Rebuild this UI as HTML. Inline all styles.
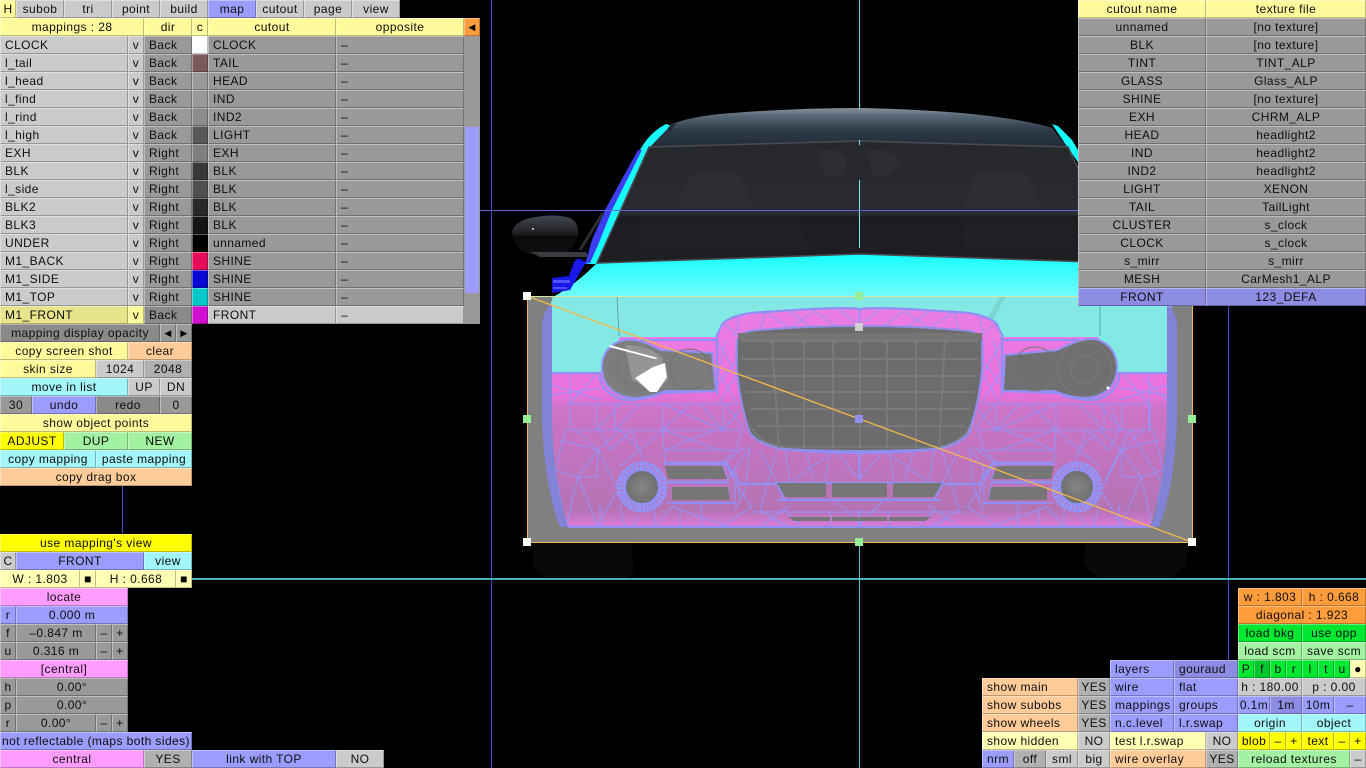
<!DOCTYPE html>
<html><head><meta charset="utf-8"><title>Mapping</title>
<style>
html,body{margin:0;padding:0;background:#000;width:1366px;height:768px;overflow:hidden}
#p{position:relative;width:1366px;height:768px;overflow:hidden;background:#000;font:12px/18px "Liberation Sans",sans-serif;letter-spacing:.42px;color:#0e0e0e;filter:blur(.35px)}
svg{position:absolute;left:0;top:0}
b{position:absolute;display:block;font-weight:normal;height:18px;text-align:center;white-space:nowrap;overflow:hidden;box-sizing:border-box;background:#999;box-shadow:inset 1px 1px 0 rgba(255,255,255,.36),inset -1px -1px 0 rgba(0,0,0,.26)}
.l{text-align:left;padding-left:5px}
.g{background:#999}.d{background:#8a8a8a}.w{background:#cbcbcb}.m{background:#b0b0b0}
.y{background:#fffb9c}.p{background:#ffffb4}.Y{background:#ffff00}
.b{background:#9c9cff}.B{background:#8c8ce2}.k{background:#ff9cff}
.c{background:#a2f5f8}.o{background:#ffcc99}.n{background:#a2f2a2}.N{background:#00e832}.O{background:#ff9c3c}
</style></head><body><div id="p">
<svg width="1366" height="768" viewBox="0 0 1366 768">
<defs>
<linearGradient id="rf" x1="0" y1="0" x2="0" y2="1"><stop offset="0" stop-color="#8a939c"/><stop offset=".18" stop-color="#5c6b7a"/><stop offset=".55" stop-color="#303c4a"/><stop offset="1" stop-color="#212b37"/></linearGradient>
<linearGradient id="ws" x1="0" y1="0" x2="0" y2="1"><stop offset="0" stop-color="#25272c"/><stop offset=".6" stop-color="#2a2b30"/><stop offset=".62" stop-color="#1c1d20"/><stop offset="1" stop-color="#1e1f23"/></linearGradient>
<linearGradient id="cy" x1="0" y1="0" x2="0" y2="1"><stop offset="0" stop-color="#14ffff"/><stop offset=".4" stop-color="#3cfdfd"/><stop offset="1" stop-color="#72fcfa"/></linearGradient>
<linearGradient id="pk" x1="0" y1="0" x2="0" y2="1"><stop offset="0" stop-color="#ea7ee4"/><stop offset=".38" stop-color="#ec72de"/><stop offset=".46" stop-color="#cc74c8"/><stop offset=".92" stop-color="#b474b4"/><stop offset="1" stop-color="#dc7cdc"/></linearGradient>
<linearGradient id="mr" x1="0" y1="0" x2="0" y2="1"><stop offset="0" stop-color="#43474f"/><stop offset=".5" stop-color="#1a1b1f"/><stop offset=".55" stop-color="#0a0a0a"/><stop offset="1" stop-color="#101010"/></linearGradient>
<radialGradient id="fg"><stop offset="0" stop-color="#858585"/><stop offset="1" stop-color="#6e6e6e"/></radialGradient>
<g id="half">
<path fill="none" stroke="#9494f8" stroke-width="1" d="M568,404H735M566,430H742M570,373V430M597,404V430M615,404V430M663,404V430M723,404V430
M552,385L600,400M552,395L600,388M597,373L570,404M620,404L597,430M640,404L615,430M690,404L663,430M663,404L723,430M700,404L723,430
M575,430L598,450L620,430L598,450L578,477L566,527M598,450L618,490L597,527M598,450L597,477L578,477M578,477L598,527M578,477L555,470M555,470L566,430M555,470L562,505
M620,430L640,450L663,430L640,450L620,466M663,430L665,466M663,430L720,450M715,430L665,450H742M742,430L735,450L705,480M745,447L700,483L702,527M750,447L725,483M750,447L745,490L735,510
M665,462H725L735,483L752,507L720,527M665,483H725M665,503H735M672,507L655,527M672,507L730,527L700,527M728,466L735,483V505M735,466L740,500M725,466L730,500
M600,527V505M625,527L620,505M655,527V505M680,507V527M640,515L632,527M777,450L760,510L790,527M760,450L777,483M785,450L790,483L835,450L860,480M805,450L815,483M825,483L830,450M860,450V480
M777,500H860M752,512H860M770,517L785,527M785,510L800,525M830,512V527M790,505L760,527M835,500L860,525V510M600,430L610,450L632,430M632,430L645,465M560,440L598,450"/>
<path fill="none" stroke="#9494f8" stroke-width="1" d="M723,323L740,337M740,315L735,337M765,312L760,330M765,312L790,328M790,312L810,326M815,311L790,328M815,311L835,326M840,310L860,326M860,310V326
M716,340L737,375M726,340L718,372M718,372L738,405M738,372L718,405M718,385L735,362M725,404L745,430M740,410L722,432"/>
<path fill="none" stroke="#9090f4" stroke-width="2.2" d="M723,323Q732,316 750,313Q860,305 860,310M716,337L723,323M640,340H716M717,337V395M600,372Q598,390 620,399Q640,402 662,393L715,391M552,373H600M737,340Q734,385 750,433Q760,445 783,449Q820,453 860,453M665,464H727L740,484H777L785,500M668,482H725M672,503H735M780,500H860M775,483H860M568,527H860"/>
<path fill="#767676" d="M665,466H722L727,479H668ZM672,487H728L730,500H672ZM777,483H826V497H785Z"/>
<path fill="#767676" d="M788,517H830V521H794ZM832,517H860V521H832ZM832,483H860V497H832Z"/>
<circle cx="642" cy="487" r="21" fill="none" stroke="#9494f8" stroke-width="8" stroke-dasharray="3.2 1"/>
<circle cx="642" cy="487" r="24.5" fill="none" stroke="#9494f8" stroke-width="1.5"/>
<circle cx="642" cy="487" r="17" fill="url(#fg)" stroke="#9090f4" stroke-width="2"/>
<path fill="#8282d6" d="M551,304Q543,312 542,325V420Q545,490 560,527H568Q553,480 552,420V304Z"/>
</g>
</defs>

<rect x="491" y="0" width="1" height="768" fill="#4a4ac4"/>
<rect x="1228" y="300" width="1" height="362" fill="#4a4ac4"/>
<rect x="122" y="484" width="1" height="52" fill="#4a4ac4"/>
<rect x="192" y="578" width="1174" height="2" fill="#46b4b4"/>

<!-- tyres -->
<path fill="#090909" d="M534,543H631L634,570L628,578H545L533,565Z"/>
<path fill="#090909" d="M1085,543H1188L1186,565L1172,578H1098L1084,565Z"/>

<!-- upper car -->
<path fill="url(#cy)" d="M553,297Q575,285 597,263L860,254L1120,263Q1150,285 1172,297Z"/>
<path fill="#16ffff" d="M666,124L672,126L655,147L597,264L585,264Q596,235 612,205Q625,175 640,150Q650,132 666,124Z"/>
<path fill="#3c3cf0" d="M638,150L642,150L612,210L598,245L590,263L585,264L592,240L605,210Z"/>
<path fill="#16ffff" d="M1052,124L1058,126L1072,140L1082,157V168L1066,145Z"/>
<path fill="#1818e8" d="M578,258L586,262L570,290L552,293V278L569,276L574,262Z"/>
<path fill="#5050ff" d="M553,280H570V283H553ZM553,287H567V289H553Z"/>
<path fill="url(#rf)" d="M672,124Q690,117 720,114Q790,108 860,108Q960,110 1017,120Q1040,124 1052,128L1067,147L860,141L650,147Z"/>
<path fill="#222b36" d="M668,128L672,123L676,124L668,135Z"/>
<path fill="url(#ws)" stroke="#484a50" stroke-width="1.6" d="M649,147L860,141L1068,147L1122,263L860,254L597,263Z"/>
<path fill="#2d2e33" d="M690,175Q715,172 740,175Q748,190 752,208H678Q682,190 690,175ZM820,150Q845,148 847,162Q845,178 828,176Q818,170 820,150ZM868,150Q895,148 900,162Q895,178 872,176ZM975,175Q1000,172 1028,175Q1036,190 1040,208H965Q968,190 975,175Z"/>
<path fill="#202125" d="M640,222H800L808,250H638ZM965,222H1075V250H962Z"/>
<rect x="859" y="0" width="1" height="109" fill="#6cd8e4"/>
<rect x="859" y="140" width="1" height="5" fill="#7fe4ee"/>
<rect x="859" y="180" width="1" height="68" fill="#7fe4ee"/>
<rect x="859" y="543" width="1" height="225" fill="#50c8d8"/>
<rect x="480" y="210" width="600" height="1" fill="#6464d8"/>
<!-- mirror -->
<path fill="url(#mr)" d="M512,232Q514,222 530,218Q555,213 570,218Q579,222 578,235Q574,250 562,254H530Q514,250 512,232Z"/>
<path fill="#3a3c42" d="M530,252H586L588,257H540Z"/>
<path stroke="#2a3030" stroke-width="3" fill="none" d="M580,250L603,213"/>
<circle cx="533" cy="229" r="1" fill="#d8d8d8"/>

<!-- box -->
<rect x="527" y="296" width="665" height="246" fill="#808080"/>
<path fill="#84e8e4" d="M553,296H1172V300L1167,374H552L549,310Z"/>
<path fill="#7ad6d2" d="M1000,296L1006,296L990,325L984,325Z"/>
<path fill="none" stroke="#5da8a6" d="M617,296L619,336M1100,296V336"/>
<path fill="url(#pk)" d="M552,373H600L620,337H717L723,323Q732,316 750,313Q860,305 967,313Q988,316 997,326L1001,337H1098L1118,373H1167L1167,420Q1165,480 1150,527H568Q553,480 552,420Z"/>
<use href="#half"/>
<use href="#half" transform="translate(1719,0) scale(-1,1)"/>
<path fill="none" stroke="#9494f8" stroke-width="1" d="M1110,404L1120,430M1135,404H1150V430M1145,380L1167,400M1130,430L1160,480M1105,480L1130,430"/>

<!-- headlights -->
<path fill="#7c7c7c" stroke="#9090f4" stroke-width="2" d="M602,369Q602,345 625,340Q640,338 660,350L712,353L716,391H665Q650,398 632,398Q604,394 602,369Z"/>
<circle cx="632" cy="369" r="26" fill="none" stroke="#848484"/>
<circle cx="632" cy="369" r="15" fill="none" stroke="#747474"/>
<circle cx="690" cy="369" r="20" fill="none" stroke="#727272"/>
<path fill="#a8a8a8" d="M625,345Q650,345 662,358L668,380L655,392L632,380Z" opacity=".55"/>
<path fill="#fff" d="M610,345L658,358L655,359L609,347ZM665,363L667,377L657,392L650,392L635,378L653,367Z"/>
<path fill="#6f6f6f" stroke="#9090f4" stroke-width="2" d="M1117,369Q1117,345 1095,339Q1080,338 1058,350L1005,355L1003,391H1055Q1070,398 1088,398Q1115,394 1117,369Z"/>
<circle cx="1085" cy="369" r="27" fill="none" stroke="#7a7a7a"/>
<circle cx="1085" cy="369" r="14" fill="none" stroke="#7a7a7a"/>
<circle cx="1035" cy="369" r="22" fill="none" stroke="#787878"/>
<circle cx="1108" cy="388" r="1.5" fill="#fff"/>

<!-- grille -->
<path fill="#6c6c6c" stroke="#8e8ee8" stroke-width="2" d="M737,342Q738,334 750,331Q800,326 860,326Q920,326 970,331Q981,334 982,342V370Q978,410 968,433Q958,445 935,449Q860,453 785,449Q760,445 750,433Q740,405 737,370Z"/>
<path fill="#757575" d="M738,333H982V341H738Z"/>
<path fill="none" stroke="#7a7a7a" stroke-width="2" d="M742,341H978M742,359H978M743,376H976M746,392H974M750,409H970M756,426H964M772,340L779,448M804,340V448M833,340V448M860,340V448M887,340V448M916,340V448M945,340L939,448"/>
<path fill="none" stroke="#7a857a" d="M750,425Q760,445 785,447H935Q960,445 970,425"/>

<!-- box edges -->
<rect x="527" y="296" width="665" height="1" fill="#d6e6a6"/>
<rect x="527" y="296" width="1" height="246" fill="#f2b84c"/>
<rect x="1192" y="296" width="1" height="246" fill="#f2b84c"/>
<rect x="527" y="542" width="665" height="1" fill="#f2b84c"/>
<path d="M527,296L1192,542" stroke="#f2b84c" stroke-width="1.3" fill="none"/>
<rect x="523" y="292" width="8" height="8" fill="#fff"/>
<rect x="1188" y="538" width="8" height="8" fill="#fff"/>
<rect x="523" y="538" width="8" height="8" fill="#fff"/>
<rect x="855" y="292" width="8" height="8" fill="#96ee96"/>
<rect x="523" y="415" width="8" height="8" fill="#96ee96"/>
<rect x="1188" y="415" width="8" height="8" fill="#96ee96"/>
<rect x="855" y="538" width="8" height="8" fill="#96ee96"/>
<rect x="855" y="323" width="8" height="8" fill="#cfcfcf"/>
<rect x="855" y="415" width="8" height="8" fill="#9090f0"/>
</svg>

<!-- top tabs -->
<b class="y" style="left:0;top:0;width:16px">H</b>
<b class="w" style="left:16px;top:0;width:48px">subob</b>
<b class="w" style="left:64px;top:0;width:48px">tri</b>
<b class="w" style="left:112px;top:0;width:48px">point</b>
<b class="w" style="left:160px;top:0;width:48px">build</b>
<b class="b" style="left:208px;top:0;width:48px">map</b>
<b class="w" style="left:256px;top:0;width:48px">cutout</b>
<b class="w" style="left:304px;top:0;width:48px">page</b>
<b class="w" style="left:352px;top:0;width:48px">view</b>
<!-- header -->
<b class="y" style="left:0;top:18px;width:144px">mappings : 28</b>
<b class="y" style="left:144px;top:18px;width:48px">dir</b>
<b class="y" style="left:192px;top:18px;width:16px">c</b>
<b class="y" style="left:208px;top:18px;width:128px">cutout</b>
<b class="y" style="left:336px;top:18px;width:128px">opposite</b>
<b class="O" style="left:464px;top:18px;width:16px;font-size:9px;color:#000">◀</b>
<!-- rows -->
<b class="w l" style="left:0;top:36px;width:128px">CLOCK</b><b class="w" style="left:128px;top:36px;width:16px">v</b><b class="g l" style="left:144px;top:36px;width:48px">Back</b><b style="left:192px;top:36px;width:16px;background:#fff"></b><b class="g l" style="left:208px;top:36px;width:128px">CLOCK</b><b class="g l" style="left:336px;top:36px;width:128px">–</b>
<b class="w l" style="left:0;top:54px;width:128px">l_tail</b><b class="w" style="left:128px;top:54px;width:16px">v</b><b class="g l" style="left:144px;top:54px;width:48px">Back</b><b style="left:192px;top:54px;width:16px;background:#7c5a5a"></b><b class="g l" style="left:208px;top:54px;width:128px">TAIL</b><b class="g l" style="left:336px;top:54px;width:128px">–</b>
<b class="w l" style="left:0;top:72px;width:128px">l_head</b><b class="w" style="left:128px;top:72px;width:16px">v</b><b class="g l" style="left:144px;top:72px;width:48px">Back</b><b style="left:192px;top:72px;width:16px;background:#999"></b><b class="g l" style="left:208px;top:72px;width:128px">HEAD</b><b class="g l" style="left:336px;top:72px;width:128px">–</b>
<b class="w l" style="left:0;top:90px;width:128px">l_find</b><b class="w" style="left:128px;top:90px;width:16px">v</b><b class="g l" style="left:144px;top:90px;width:48px">Back</b><b style="left:192px;top:90px;width:16px;background:#999"></b><b class="g l" style="left:208px;top:90px;width:128px">IND</b><b class="g l" style="left:336px;top:90px;width:128px">–</b>
<b class="w l" style="left:0;top:108px;width:128px">l_rind</b><b class="w" style="left:128px;top:108px;width:16px">v</b><b class="g l" style="left:144px;top:108px;width:48px">Back</b><b style="left:192px;top:108px;width:16px;background:#8c8c8c"></b><b class="g l" style="left:208px;top:108px;width:128px">IND2</b><b class="g l" style="left:336px;top:108px;width:128px">–</b>
<b class="w l" style="left:0;top:126px;width:128px">l_high</b><b class="w" style="left:128px;top:126px;width:16px">v</b><b class="g l" style="left:144px;top:126px;width:48px">Back</b><b style="left:192px;top:126px;width:16px;background:#585858"></b><b class="g l" style="left:208px;top:126px;width:128px">LIGHT</b><b class="g l" style="left:336px;top:126px;width:128px">–</b>
<b class="w l" style="left:0;top:144px;width:128px">EXH</b><b class="w" style="left:128px;top:144px;width:16px">v</b><b class="g l" style="left:144px;top:144px;width:48px">Right</b><b style="left:192px;top:144px;width:16px;background:#808080"></b><b class="g l" style="left:208px;top:144px;width:128px">EXH</b><b class="g l" style="left:336px;top:144px;width:128px">–</b>
<b class="w l" style="left:0;top:162px;width:128px">BLK</b><b class="w" style="left:128px;top:162px;width:16px">v</b><b class="g l" style="left:144px;top:162px;width:48px">Right</b><b style="left:192px;top:162px;width:16px;background:#383838"></b><b class="g l" style="left:208px;top:162px;width:128px">BLK</b><b class="g l" style="left:336px;top:162px;width:128px">–</b>
<b class="w l" style="left:0;top:180px;width:128px">l_side</b><b class="w" style="left:128px;top:180px;width:16px">v</b><b class="g l" style="left:144px;top:180px;width:48px">Right</b><b style="left:192px;top:180px;width:16px;background:#505050"></b><b class="g l" style="left:208px;top:180px;width:128px">BLK</b><b class="g l" style="left:336px;top:180px;width:128px">–</b>
<b class="w l" style="left:0;top:198px;width:128px">BLK2</b><b class="w" style="left:128px;top:198px;width:16px">v</b><b class="g l" style="left:144px;top:198px;width:48px">Right</b><b style="left:192px;top:198px;width:16px;background:#282828"></b><b class="g l" style="left:208px;top:198px;width:128px">BLK</b><b class="g l" style="left:336px;top:198px;width:128px">–</b>
<b class="w l" style="left:0;top:216px;width:128px">BLK3</b><b class="w" style="left:128px;top:216px;width:16px">v</b><b class="g l" style="left:144px;top:216px;width:48px">Right</b><b style="left:192px;top:216px;width:16px;background:#141414"></b><b class="g l" style="left:208px;top:216px;width:128px">BLK</b><b class="g l" style="left:336px;top:216px;width:128px">–</b>
<b class="w l" style="left:0;top:234px;width:128px">UNDER</b><b class="w" style="left:128px;top:234px;width:16px">v</b><b class="g l" style="left:144px;top:234px;width:48px">Right</b><b style="left:192px;top:234px;width:16px;background:#000"></b><b class="g l" style="left:208px;top:234px;width:128px">unnamed</b><b class="g l" style="left:336px;top:234px;width:128px">–</b>
<b class="w l" style="left:0;top:252px;width:128px">M1_BACK</b><b class="w" style="left:128px;top:252px;width:16px">v</b><b class="g l" style="left:144px;top:252px;width:48px">Right</b><b style="left:192px;top:252px;width:16px;background:#e80c5c"></b><b class="g l" style="left:208px;top:252px;width:128px">SHINE</b><b class="g l" style="left:336px;top:252px;width:128px">–</b>
<b class="w l" style="left:0;top:270px;width:128px">M1_SIDE</b><b class="w" style="left:128px;top:270px;width:16px">v</b><b class="g l" style="left:144px;top:270px;width:48px">Right</b><b style="left:192px;top:270px;width:16px;background:#0808d0"></b><b class="g l" style="left:208px;top:270px;width:128px">SHINE</b><b class="g l" style="left:336px;top:270px;width:128px">–</b>
<b class="w l" style="left:0;top:288px;width:128px">M1_TOP</b><b class="w" style="left:128px;top:288px;width:16px">v</b><b class="g l" style="left:144px;top:288px;width:48px">Right</b><b style="left:192px;top:288px;width:16px;background:#00c8c8"></b><b class="g l" style="left:208px;top:288px;width:128px">SHINE</b><b class="g l" style="left:336px;top:288px;width:128px">–</b>
<b class="l" style="left:0;top:306px;width:128px;background:#e8e48c">M1_FRONT</b><b class="y" style="left:128px;top:306px;width:16px">v</b><b class="d l" style="left:144px;top:306px;width:48px">Back</b><b style="left:192px;top:306px;width:16px;background:#d010d0"></b><b class="w l" style="left:208px;top:306px;width:128px">FRONT</b><b class="w l" style="left:336px;top:306px;width:128px">–</b>
<!-- scrollbar -->
<b class="g" style="left:464px;top:36px;width:16px;height:288px;box-shadow:none"></b>
<b class="b" style="left:465px;top:127px;width:14px;height:166px;box-shadow:none"></b>
<!-- left lower -->
<b class="d" style="left:0;top:324px;width:160px">mapping display opacity</b>
<b class="g" style="left:160px;top:324px;width:16px;font-size:9px;color:#000">◀</b>
<b class="g" style="left:176px;top:324px;width:16px;font-size:9px;color:#000">▶</b>
<b class="y" style="left:0;top:342px;width:128px">copy screen shot</b><b class="o" style="left:128px;top:342px;width:64px">clear</b>
<b class="y" style="left:0;top:360px;width:96px">skin size</b><b class="w" style="left:96px;top:360px;width:48px">1024</b><b class="m" style="left:144px;top:360px;width:48px">2048</b>
<b class="c" style="left:0;top:378px;width:128px">move in list</b><b class="w" style="left:128px;top:378px;width:32px">UP</b><b class="w" style="left:160px;top:378px;width:32px">DN</b>
<b class="g" style="left:0;top:396px;width:32px">30</b><b class="b" style="left:32px;top:396px;width:64px">undo</b><b class="d" style="left:96px;top:396px;width:64px">redo</b><b class="g" style="left:160px;top:396px;width:32px">0</b>
<b class="y" style="left:0;top:414px;width:192px">show object points</b>
<b class="Y" style="left:0;top:432px;width:64px">ADJUST</b><b class="n" style="left:64px;top:432px;width:64px">DUP</b><b class="n" style="left:128px;top:432px;width:64px">NEW</b>
<b class="c" style="left:0;top:450px;width:96px">copy mapping</b><b class="c" style="left:96px;top:450px;width:96px">paste mapping</b>
<b class="o" style="left:0;top:468px;width:192px">copy drag box</b>

<b class="Y" style="left:0;top:534px;width:192px">use mapping's view</b>
<b class="w" style="left:0;top:552px;width:16px">C</b><b class="b" style="left:16px;top:552px;width:128px">FRONT</b><b class="c" style="left:144px;top:552px;width:48px">view</b>
<b class="p" style="left:0;top:570px;width:80px">W : 1.803</b><b class="p" style="left:80px;top:570px;width:16px;color:#000">■</b><b class="p" style="left:96px;top:570px;width:80px">H : 0.668</b><b class="p" style="left:176px;top:570px;width:16px;color:#000">■</b>
<b class="k" style="left:0;top:588px;width:128px">locate</b>
<b class="b" style="left:0;top:606px;width:16px">r</b><b class="b" style="left:16px;top:606px;width:112px">0.000 m</b>
<b class="g" style="left:0;top:624px;width:16px">f</b><b class="g" style="left:16px;top:624px;width:80px">–0.847 m</b><b class="g" style="left:96px;top:624px;width:16px">–</b><b class="g" style="left:112px;top:624px;width:16px">+</b>
<b class="g" style="left:0;top:642px;width:16px">u</b><b class="g" style="left:16px;top:642px;width:80px">0.316 m</b><b class="g" style="left:96px;top:642px;width:16px">–</b><b class="g" style="left:112px;top:642px;width:16px">+</b>
<b class="k" style="left:0;top:660px;width:128px">[central]</b>
<b class="g" style="left:0;top:678px;width:16px">h</b><b class="g" style="left:16px;top:678px;width:112px">0.00°</b>
<b class="g" style="left:0;top:696px;width:16px">p</b><b class="g" style="left:16px;top:696px;width:112px">0.00°</b>
<b class="g" style="left:0;top:714px;width:16px">r</b><b class="g" style="left:16px;top:714px;width:80px">0.00°</b><b class="g" style="left:96px;top:714px;width:16px">–</b><b class="g" style="left:112px;top:714px;width:16px">+</b>
<b class="b" style="left:0;top:732px;width:192px">not reflectable (maps both sides)</b>
<b class="k" style="left:0;top:750px;width:144px">central</b><b class="m" style="left:144px;top:750px;width:48px">YES</b><b class="b" style="left:192px;top:750px;width:144px">link with TOP</b><b class="w" style="left:336px;top:750px;width:48px">NO</b>
<!-- right table -->
<b class="y" style="left:1078px;top:0;width:128px">cutout name</b><b class="y" style="left:1206px;top:0;width:160px">texture file</b>
<b class="g" style="left:1078px;top:18px;width:128px">unnamed</b><b class="g" style="left:1206px;top:18px;width:160px">[no texture]</b>
<b class="g" style="left:1078px;top:36px;width:128px">BLK</b><b class="g" style="left:1206px;top:36px;width:160px">[no texture]</b>
<b class="g" style="left:1078px;top:54px;width:128px">TINT</b><b class="g" style="left:1206px;top:54px;width:160px">TINT_ALP</b>
<b class="g" style="left:1078px;top:72px;width:128px">GLASS</b><b class="g" style="left:1206px;top:72px;width:160px">Glass_ALP</b>
<b class="g" style="left:1078px;top:90px;width:128px">SHINE</b><b class="g" style="left:1206px;top:90px;width:160px">[no texture]</b>
<b class="g" style="left:1078px;top:108px;width:128px">EXH</b><b class="g" style="left:1206px;top:108px;width:160px">CHRM_ALP</b>
<b class="g" style="left:1078px;top:126px;width:128px">HEAD</b><b class="g" style="left:1206px;top:126px;width:160px">headlight2</b>
<b class="g" style="left:1078px;top:144px;width:128px">IND</b><b class="g" style="left:1206px;top:144px;width:160px">headlight2</b>
<b class="g" style="left:1078px;top:162px;width:128px">IND2</b><b class="g" style="left:1206px;top:162px;width:160px">headlight2</b>
<b class="g" style="left:1078px;top:180px;width:128px">LIGHT</b><b class="g" style="left:1206px;top:180px;width:160px">XENON</b>
<b class="g" style="left:1078px;top:198px;width:128px">TAIL</b><b class="g" style="left:1206px;top:198px;width:160px">TailLight</b>
<b class="g" style="left:1078px;top:216px;width:128px">CLUSTER</b><b class="g" style="left:1206px;top:216px;width:160px">s_clock</b>
<b class="g" style="left:1078px;top:234px;width:128px">CLOCK</b><b class="g" style="left:1206px;top:234px;width:160px">s_clock</b>
<b class="g" style="left:1078px;top:252px;width:128px">s_mirr</b><b class="g" style="left:1206px;top:252px;width:160px">s_mirr</b>
<b class="g" style="left:1078px;top:270px;width:128px">MESH</b><b class="g" style="left:1206px;top:270px;width:160px">CarMesh1_ALP</b>
<b class="B" style="left:1078px;top:288px;width:128px">FRONT</b><b class="B" style="left:1206px;top:288px;width:160px">123_DEFA</b>
<!-- bottom right -->
<b class="O" style="left:1238px;top:588px;width:64px">w : 1.803</b><b class="O" style="left:1302px;top:588px;width:64px">h : 0.668</b>
<b class="O" style="left:1238px;top:606px;width:128px">diagonal : 1.923</b>
<b class="N" style="left:1238px;top:624px;width:64px">load bkg</b><b class="N" style="left:1302px;top:624px;width:64px">use opp</b>
<b class="n" style="left:1238px;top:642px;width:64px">load scm</b><b class="n" style="left:1302px;top:642px;width:64px">save scm</b>
<b class="N" style="left:1238px;top:660px;width:16px">P</b><b style="left:1254px;top:660px;width:16px;background:#00c82c">f</b><b class="N" style="left:1270px;top:660px;width:16px">b</b><b class="N" style="left:1286px;top:660px;width:16px">r</b><b class="N" style="left:1302px;top:660px;width:16px">l</b><b class="N" style="left:1318px;top:660px;width:16px">t</b><b class="N" style="left:1334px;top:660px;width:16px">u</b><b class="p" style="left:1350px;top:660px;width:16px;color:#000">●</b>
<b class="w" style="left:1238px;top:678px;width:64px">h : 180.00</b><b class="w" style="left:1302px;top:678px;width:64px">p : 0.00</b>
<b class="b" style="left:1238px;top:696px;width:32px">0.1m</b><b class="B" style="left:1270px;top:696px;width:32px">1m</b><b class="b" style="left:1302px;top:696px;width:32px">10m</b><b class="b" style="left:1334px;top:696px;width:32px">–</b>
<b class="c" style="left:1238px;top:714px;width:64px">origin</b><b class="c" style="left:1302px;top:714px;width:64px">object</b>
<b class="Y" style="left:1238px;top:732px;width:32px">blob</b><b class="Y" style="left:1270px;top:732px;width:16px">–</b><b class="Y" style="left:1286px;top:732px;width:16px">+</b><b class="Y" style="left:1302px;top:732px;width:32px">text</b><b class="Y" style="left:1334px;top:732px;width:16px">–</b><b class="Y" style="left:1350px;top:732px;width:16px">+</b>
<b class="n" style="left:1238px;top:750px;width:112px">reload textures</b><b class="w" style="left:1350px;top:750px;width:16px">–</b>

<b class="b l" style="left:1110px;top:660px;width:64px">layers</b><b class="B l" style="left:1174px;top:660px;width:64px">gouraud</b>
<b class="b l" style="left:1110px;top:678px;width:64px">wire</b><b class="b l" style="left:1174px;top:678px;width:64px">flat</b>
<b class="b l" style="left:1110px;top:696px;width:64px">mappings</b><b class="b l" style="left:1174px;top:696px;width:64px">groups</b>
<b class="b l" style="left:1110px;top:714px;width:64px">n.c.level</b><b class="b l" style="left:1174px;top:714px;width:64px">l.r.swap</b>
<b class="p l" style="left:1110px;top:732px;width:96px">test l.r.swap</b><b class="w" style="left:1206px;top:732px;width:32px">NO</b>
<b class="o l" style="left:1110px;top:750px;width:96px">wire overlay</b><b class="m" style="left:1206px;top:750px;width:32px">YES</b>

<b class="o l" style="left:982px;top:678px;width:96px">show main</b><b class="m" style="left:1078px;top:678px;width:32px">YES</b>
<b class="o l" style="left:982px;top:696px;width:96px">show subobs</b><b class="m" style="left:1078px;top:696px;width:32px">YES</b>
<b class="o l" style="left:982px;top:714px;width:96px">show wheels</b><b class="m" style="left:1078px;top:714px;width:32px">YES</b>
<b class="p l" style="left:982px;top:732px;width:96px">show hidden</b><b class="w" style="left:1078px;top:732px;width:32px">NO</b>
<b class="b" style="left:982px;top:750px;width:32px">nrm</b><b class="m" style="left:1014px;top:750px;width:32px">off</b><b class="w" style="left:1046px;top:750px;width:32px">sml</b><b class="w" style="left:1078px;top:750px;width:32px">big</b>
</div></body></html>
